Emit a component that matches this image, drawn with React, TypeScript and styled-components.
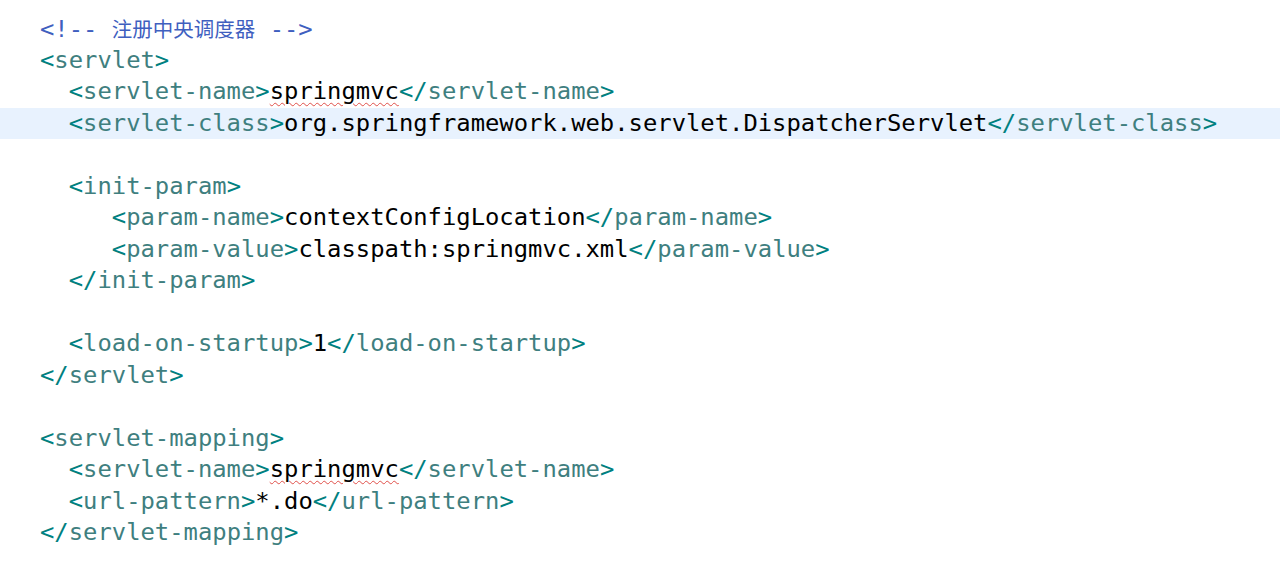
import styled, { createGlobalStyle } from "styled-components";

const GlobalStyle = createGlobalStyle`
  html, body {
    margin: 0;
    padding: 0;
    background: #ffffff;
  }
`;

const Editor = styled.div`
  width: 1280px;
  height: 578px;
  padding-top: 13px;
  box-sizing: border-box;
  font-family: "DejaVu Sans Mono", "Liberation Mono", "Noto Sans CJK SC", monospace;
  font-size: 23.85px;
  background: #ffffff;
  overflow: hidden;
`;

const Line = styled.div<{ $indent: number; $current?: boolean }>`
  height: 31.5px;
  line-height: 31.5px;
  padding-left: calc(40px + ${(p) => p.$indent}ch);
  background: ${(p) => (p.$current ? "#e8f2fe" : "transparent")};
  white-space: pre;
`;

const Delim = styled.span`
  color: #008080;
`;

const TagName = styled.span`
  color: #3f7f7f;
`;

const Content = styled.span`
  color: #000000;
`;

const Misspelled = styled(Content)`
  text-decoration: underline wavy #e0504a;
  text-decoration-thickness: 1px;
  text-underline-offset: 3px;
`;

const Comment = styled.span`
  color: #3f5fbf;
`;

const Cjk = styled.span`
  font-family: "Noto Sans CJK SC", sans-serif;
  font-size: 20.5px;
`;

const Open = ({ name }: { name: string }) => (
  <>
    <Delim>&lt;</Delim>
    <TagName>{name}</TagName>
    <Delim>&gt;</Delim>
  </>
);

const Close = ({ name }: { name: string }) => (
  <>
    <Delim>&lt;/</Delim>
    <TagName>{name}</TagName>
    <Delim>&gt;</Delim>
  </>
);

const Element = ({ name, value, typo }: { name: string; value: string; typo?: boolean }) => (
  <>
    <Open name={name} />
    {typo ? <Misspelled>{value}</Misspelled> : <Content>{value}</Content>}
    <Close name={name} />
  </>
);

export default function App() {
  return (
    <>
      <GlobalStyle />
      <Editor>
        <Line $indent={0}>
          <Comment>
            &lt;!-- <Cjk>注册中央调度器</Cjk> --&gt;
          </Comment>
        </Line>
        <Line $indent={0}>
          <Open name="servlet" />
        </Line>
        <Line $indent={2}>
          <Element name="servlet-name" value="springmvc" typo />
        </Line>
        <Line $indent={2} $current>
          <Element name="servlet-class" value="org.springframework.web.servlet.DispatcherServlet" />
        </Line>
        <Line $indent={0} />
        <Line $indent={2}>
          <Open name="init-param" />
        </Line>
        <Line $indent={5}>
          <Element name="param-name" value="contextConfigLocation" />
        </Line>
        <Line $indent={5}>
          <Element name="param-value" value="classpath:springmvc.xml" />
        </Line>
        <Line $indent={2}>
          <Close name="init-param" />
        </Line>
        <Line $indent={0} />
        <Line $indent={2}>
          <Element name="load-on-startup" value="1" />
        </Line>
        <Line $indent={0}>
          <Close name="servlet" />
        </Line>
        <Line $indent={0} />
        <Line $indent={0}>
          <Open name="servlet-mapping" />
        </Line>
        <Line $indent={2}>
          <Element name="servlet-name" value="springmvc" typo />
        </Line>
        <Line $indent={2}>
          <Element name="url-pattern" value="*.do" />
        </Line>
        <Line $indent={0}>
          <Close name="servlet-mapping" />
        </Line>
      </Editor>
    </>
  );
}
